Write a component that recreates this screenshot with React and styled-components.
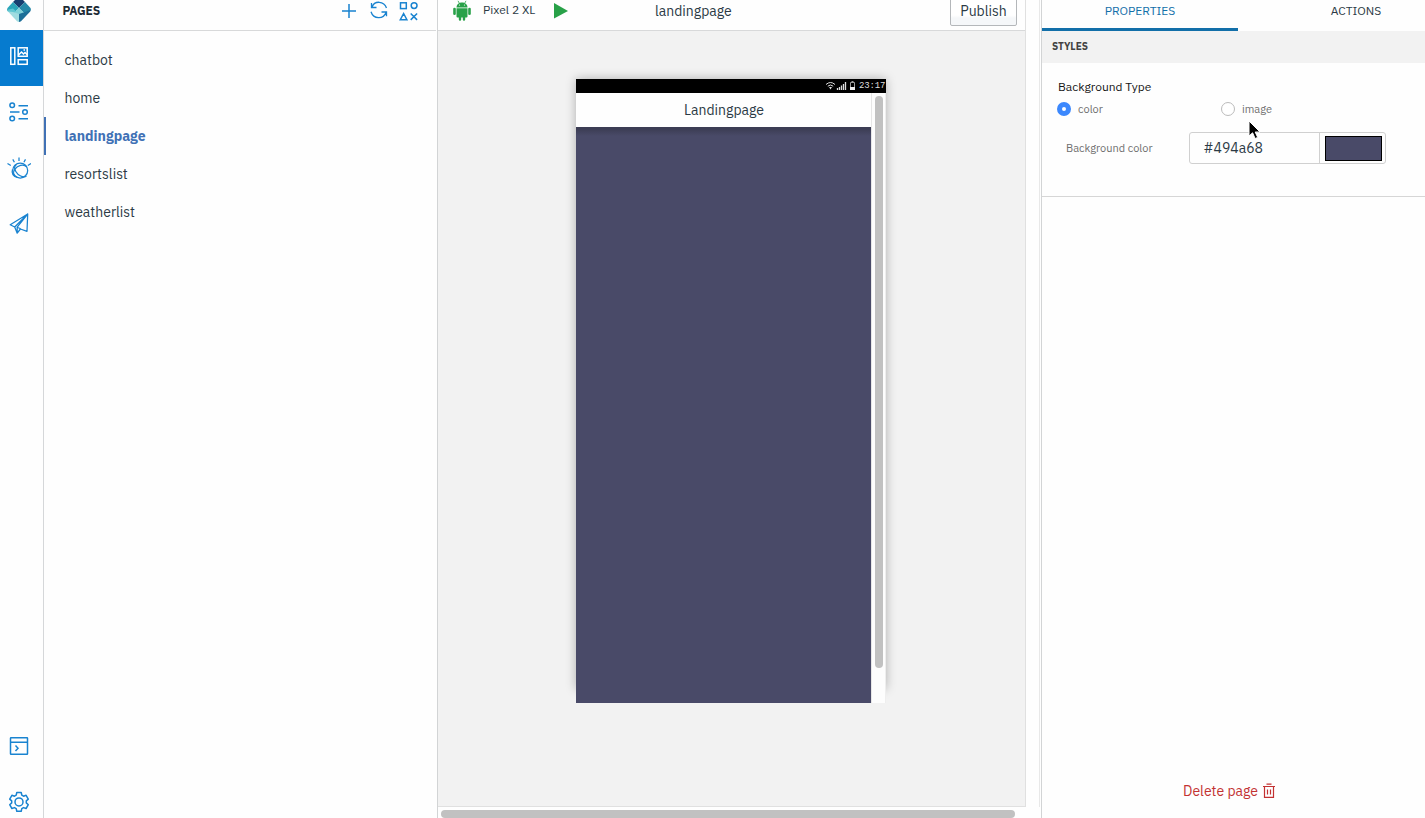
import React from "react";
import styled, { createGlobalStyle } from "styled-components";

const Global = createGlobalStyle`
  * { box-sizing: border-box; }
  body { margin: 0; overflow: hidden; background: #fefefe; font-family: "IBM Plex Sans", Roboto, "Liberation Sans", sans-serif; }
  svg { display: block; flex: none; }
`;

const Shell = styled.div`
  display: flex;
  width: 1425px;
  height: 818px;
  overflow: hidden;
  background: #fefefe;
`;

const Label = styled.span`
  font-size: ${(p) => p.$size || 14}px;
  font-weight: ${(p) => p.$weight || 400};
  letter-spacing: ${(p) => p.$track || 0}px;
  color: ${(p) => p.$color || "#2b3a45"};
  line-height: 20px;
  white-space: nowrap;
`;

const Rail = styled.nav`
  display: flex;
  flex-direction: column;
  width: 44px;
  height: 830px;
  flex: none;
  border-right: 1px solid #d5d7d9;
`;

const Brand = styled.div`
  height: 30px;
  padding-left: 6px;
`;

const RailItem = styled.div`
  display: flex;
  height: 56px;
  padding: 15px 0 0 7px;
  background: ${(p) => (p.$active ? "#067bcf" : "transparent")};
  color: ${(p) => (p.$active ? "#fff" : "#1983d0")};
`;

const RailSpace = styled.div`
  flex: 1;
`;

const PagesPanel = styled.section`
  width: 394px;
  flex: none;
  border-right: 1px solid #d2d4d5;
`;

const PagesHeader = styled.header`
  display: flex;
  height: 31px;
  width: 392px;
  padding: 1px 0 0 18.5px;
  border-bottom: 1px solid #d8d9da;
`;

const Tools = styled.div`
  display: flex;
  gap: 10px;
  margin-left: auto;
  padding: 0 17px 0 0;
  color: #1983d0;
`;

const PageList = styled.div`
  padding-top: 10px;
`;

const PageRow = styled.div`
  display: flex;
  align-items: center;
  height: 38px;
  padding-left: ${(p) => (p.$active ? 18.5 : 20.500)}px;
  border-left: ${(p) => (p.$active ? "2px solid #4071b5" : "0")};
`;

const Center = styled.main`
  width: 602px;
  flex: none;
`;

const CenterTop = styled.div`
  display: flex;
  height: 807px;
  border-right: 1px solid #e8e8e8;
`;

const Workspace = styled.div`
  width: 588px;
  background: #f2f2f2;
  border-right: 1px solid #e0e0e0;
  border-bottom: 1px solid #e0e0e0;
`;

const Toolbar = styled.header`
  display: flex;
  height: 31px;
  padding-left: 15px;
  background: #fefefe;
  border-bottom: 1px solid #d8d9da;
`;

const DeviceName = styled.div`
  display: flex;
  height: 20px;
  width: 53px;
  margin: 0 17px 0 12px;
`;

const Title = styled.div`
  display: flex;
  margin: 1px 0 0 87px;
`;

const Publish = styled.button`
  display: flex;
  align-items: flex-end;
  justify-content: center;
  width: 67px;
  height: 30px;
  margin: -4px 8px 0 auto;
  padding: 0 0 4px;
  border: 1px solid #b4b7ba;
  border-radius: 2px;
  background: linear-gradient(#fff 65%, #f5f7f9 75%);
  font-family: inherit;
`;

const Phone = styled.div`
  width: 310px;
  height: 610px;
  margin: 48px 0 0 138px;
  box-shadow: 0 0 10px rgba(0, 0, 0, 0.28);
`;

const StatusBar = styled.div`
  display: flex;
  align-items: center;
  justify-content: flex-end;
  height: 14px;
  background: #000;
  padding-right: 1px;
`;

const Clock = styled.span`
  width: 26px;
  margin-left: 3px;
  font: 9px/14px "Liberation Mono", monospace;
  letter-spacing: -0.15px;
  color: #ddd;
`;

const PhoneBody = styled.div`
  display: flex;
  height: 610px;
`;

const Screen = styled.div`
  width: 295px;
  background: #494a68;
`;

const ScreenHeader = styled.div`
  display: flex;
  align-items: center;
  justify-content: center;
  height: 34px;
  padding-left: 1px;
  background: #fefefe;
`;

const HeaderShade = styled.div`
  height: 9px;
  background: linear-gradient(#3c3d54 20%, #494a68);
`;

const Track = styled.div`
  width: 15px;
  padding: 3px 2px 0 3px;
  border-left: 1px solid #e6e6e6;
  border-right: 1px solid #eee;
  background: #fdfdfd;
`;

const VThumb = styled.div`
  width: 8px;
  height: 572px;
  border-radius: 4px;
  background: #c1c1c1;
`;

const HThumb = styled.div`
  width: 574px;
  height: 8px;
  margin: 3px 0 0 3px;
  border-radius: 4px;
  background: #c1c1c1;
`;

const Inspector = styled.aside`
  display: flex;
  flex-direction: column;
  width: 385px;
  margin-left: 1px;
  border-left: 1px solid #d2d4d5;
`;

const Tabs = styled.div`
  display: flex;
  height: 31px;
  flex: none;
`;

const Tab = styled.div`
  display: flex;
  justify-content: center;
  flex: none;
  width: ${(p) => (p.$active ? 196 : 236)}px;
  padding-top: 1px;
  border-bottom: ${(p) => (p.$active ? "3px solid #126fa9" : "0")};
`;

const Section = styled.div`
  display: flex;
  align-items: center;
  height: 32px;
  padding-left: 10px;
  background: #f2f2f2;
`;

const Form = styled.div`
  height: 134px;
  padding: 14px 0 0 15px;
  border-bottom: 1px solid #d6d6d6;
`;

const FieldTitle = styled.div`
  height: 20px;
  padding-left: 1px;
  display: flex;
`;

const Options = styled.div`
  display: flex;
  height: 25px;
`;

const Option = styled.div`
  display: flex;
  align-items: center;
  width: 164px;
  height: 24px;
  gap: 7px;
`;

const Radio = styled.span`
  width: 14px;
  height: 14px;
  border-radius: 50%;
  border: ${(p) => (p.$on ? "5px solid #3c88fd" : "1px solid #bbb")};
  background: #fff;
`;

const ColorRow = styled.div`
  display: flex;
  align-items: center;
  height: 32px;
  margin-top: 10px;
  padding-left: 9px;
`;

const ColorName = styled.div`
  display: flex;
  width: 123px;
`;

const ColorField = styled.div`
  display: flex;
  width: 197px;
  height: 32px;
  border: 1px solid #d0d0d0;
  border-radius: 3px;
`;

const HexValue = styled.div`
  display: flex;
  align-items: center;
  width: 130px;
  padding-left: 13.5px;
  border-right: 1px solid #d0d0d0;
`;

const Swatch = styled.div`
  width: 57px;
  height: 25px;
  margin: 3px 0 0 5px;
  border: 1px solid #000;
  background: #494a68;
`;

const DeleteRow = styled.div`
  display: flex;
  align-items: center;
  gap: 4px;
  margin: auto 0 17px 141px;
  color: #c33232;
`;

const Pointer = styled.div`
  position: absolute;
  left: 1247px;
  top: 120px;
`;

const Icon = ({ w = 24, h = 24, box, sw = 1.5, children }) => (
  <svg width={w} height={h} viewBox={box || `0 0 ${w} ${h}`} fill="none" stroke="currentColor" strokeWidth={sw}>
    {children}
  </svg>
);

const Logo = () => (
  <svg width="26" height="23" viewBox="0 0 26 23">
    <path d="M9 0h8l2 2-6 6-6-6z" fill="#173f70" />
    <path d="M7 2l6 6-6 6-5.500-3q-1-1 0-3z" fill="#2aa5b9" />
    <path d="M1.500 9.800L7 8.500l6 5.500-3 1-8-3.500q-1-.8-.5-1.700z" fill="#5fc6d1" />
    <path d="M13 8l6-6 5.500 6q1 1.200 0 2.500L19 14z" fill="#2589a8" />
    <path d="M13 8l6 6-6 5-6-5z" fill="#7fd2d8" />
    <path d="M13 14l6-2 5.500-2q.3 1-.5 1.700L15 21.200q-1 .8-2 .8z" fill="#1d6f98" />
    <path d="M2 11.500l5 .5 6 2v8q-1 0-2-.8z" fill="#a0dce0" />
  </svg>
);

const LayoutIcon = () => (
  <Icon>
    <rect x="3.800" y="2.800" width="4" height="16.500" />
    <rect x="11.200" y="2.800" width="9" height="8.500" />
    <rect x="11.200" y="14.700" width="9" height="4.600" />
    <path d="M11.500 10l3-3 2 2 1.500-1.500 2 2" />
    <path d="M16.500 5h1.500" />
  </Icon>
);

const SlidersIcon = () => (
  <Icon>
    <circle cx="5.200" cy="4.200" r="2.300" />
    <path d="M11.500 4.700H21M3 11h9.500M11.500 17.700H21" />
    <circle cx="18" cy="11" r="2.300" />
    <circle cx="5.200" cy="17.500" r="2.300" />
  </Icon>
);

const WatsonIcon = () => (
  <Icon sw={1.25}>
    <circle cx="13.200" cy="13.500" r="7.500" />
    <path d="M19.500 19.300c-3.500 1.700-8.500-.8-10.700-4.800-1.500-2.800-1.300-5.600.5-6.700" />
    <path d="M19.800 9.800c-3.500-3.500-9.300-1.300-11.900 2.400-2.300 3.300-1.700 7 1.700 7.800M5.500 12.500c-1.300 3.800.8 7.300 5 8" />
    <path d="M12 .5v3.400M5.800 2.400l1.600 2.800M.5 6.500l3.300 2M18.500 2.400l-1.600 2.800M24 6.500l-3.200 2" />
  </Icon>
);

const SendIcon = () => (
  <Icon sw={1.25}>
    <path transform="translate(0 -.8)" d="M20.700 1.800L3.200 12.600l4.500 2.200 2.500 6.200 3.200-4.200 6.600 2.300zM7.700 14.800l13-13-10.500 13.200v6M10.200 15l3.500 1.600" strokeLinejoin="round" />
  </Icon>
);

const TerminalIcon = () => (
  <Icon>
    <rect x="3.500" y="4.800" width="17" height="16.500" rx=".5" />
    <path d="M3.500 9.200h17M8.500 12.500l2.500 2.700-2.500 2.700" />
  </Icon>
);

const GearIcon = () => (
  <Icon>
    <path d="M9.800 3.500h4.400l.6 2.700 1.700 1 2.600-.9 2.200 3.800-2 1.800v2l2 1.800-2.200 3.800-2.600-.9-1.700 1-.6 2.700H9.800l-.6-2.700-1.700-1-2.600.9-2.200-3.800 2-1.800v-2l-2-1.800 2.200-3.800 2.600.9 1.700-1z" strokeLinejoin="round" />
    <circle cx="12" cy="12.900" r="4" />
  </Icon>
);

const PlusIcon = () => (
  <Icon w={20} h={20}>
    <path d="M10 3v14M3 10h14" />
  </Icon>
);

const SyncIcon = () => (
  <Icon w={20} h={20} sw={1.300}>
    <path d="M2.500 2V6.500h5M3 6.200C5.300-.5 15-.5 17.500 7M17.500 15.300V11h-5M17 11.500C14.500 18.500 4.500 18.500 2 10.700" />
  </Icon>
);

const ShapesIcon = () => (
  <Icon w={20} h={20} sw={1.500}>
    <rect x="1.500" y="1.800" width="5.800" height="5.800" />
    <circle cx="15.100" cy="4.600" r="2.900" />
    <path d="M4.600 12.500l3.300 6.200H1.300zM11.700 12.500l6.400 6.400M18.100 12.500l-6.400 6.400" />
  </Icon>
);

const AndroidIcon = () => (
  <svg width="18" height="22" viewBox="0 0 18 22" fill="#28a148">
    <path d="M3.500 7.500C3.500.7 14.500.7 14.500 7.500z" />
    <path d="M5 .8l1.500 2.800M13 .8l-1.500 2.800" stroke="#28a148" strokeWidth=".8" />
    <path d="M3.500 8.300h11V16.500q0 1-1 1h-1.300v2a1.200 1.200 0 0 1-2.400 0v-2H8.200v2a1.200 1.200 0 0 1-2.400 0v-2H4.500q-1 0-1-1z" />
    <rect x=".2" y="7.700" width="2.600" height="7.300" rx="1.300" />
    <rect x="15.200" y="7.700" width="2.600" height="7.300" rx="1.300" />
    <circle cx="6.500" cy="5" r=".6" fill="#fff" />
    <circle cx="11.500" cy="5" r=".6" fill="#fff" />
  </svg>
);

const StatusIcons = () => (
  <svg width="31" height="14" viewBox="0 0 31 14" fill="none" stroke="#ddd">
    <path d="M1 5.500q4.500-4 9 0M2.800 7.200q2.700-2.400 5.400 0" strokeWidth="1" />
    <path d="M4 8l1.500 2.500L7 8z" fill="#ddd" stroke="none" />
    <path d="M12.500 9v2M14.500 8v3M16.500 6.500V11M18.500 5v6M20.500 3v8" strokeWidth="1.300" />
    <path d="M25.500 3.500h4v7h-4zM26.500 2.500h2" stroke="#999" />
    <path d="M25 8h5v3h-5z" fill="#eee" stroke="none" />
  </svg>
);

const TrashIcon = () => (
  <Icon w={14} h={16} sw={1.200}>
    <path d="M1 3.500h12M4.500 1.200h5M2.500 3.500v10.900h9V3.500M5.500 6.500v5M8.500 6.500v5" />
  </Icon>
);

const pages = [
  { name: "chatbot" },
  { name: "home" },
  { name: "landingpage", active: true },
  { name: "resortslist" },
  { name: "weatherlist" },
];

export default function App() {
  return (
    <Shell>
      <Global />
      <Rail>
        <Brand><Logo /></Brand>
        <RailItem $active><LayoutIcon /></RailItem>
        <RailItem><SlidersIcon /></RailItem>
        <RailItem><WatsonIcon /></RailItem>
        <RailItem><SendIcon /></RailItem>
        <RailSpace />
        <RailItem><TerminalIcon /></RailItem>
        <RailItem><GearIcon /></RailItem>
      </Rail>
      <PagesPanel>
        <PagesHeader>
          <Label $size={12} $weight={700} $track={-0.15} $color="#1d2b35">PAGES</Label>
          <Tools><PlusIcon /><SyncIcon /><ShapesIcon /></Tools>
        </PagesHeader>
        <PageList>
          {pages.map((p) => (
            <PageRow key={p.name} $active={p.active}>
              <Label $weight={p.active ? 700 : 400} $color={p.active ? "#4071b5" : undefined}>{p.name}</Label>
            </PageRow>
          ))}
        </PageList>
      </PagesPanel>
      <Center>
        <CenterTop>
          <Workspace>
            <Toolbar>
              <AndroidIcon />
              <DeviceName><Label $size={12}>Pixel 2 XL</Label></DeviceName>
              <svg width="15" height="20" viewBox="0 0 15 20"><path d="M1 3l14 8-14 7.500z" fill="#28a148" /></svg>
              <Title><Label>landingpage</Label></Title>
              <Publish><Label>Publish</Label></Publish>
            </Toolbar>
            <Phone>
              <StatusBar><StatusIcons /><Clock>23:17</Clock></StatusBar>
              <PhoneBody>
                <Screen>
                  <ScreenHeader><Label>Landingpage</Label></ScreenHeader>
                  <HeaderShade />
                </Screen>
                <Track><VThumb /></Track>
              </PhoneBody>
            </Phone>
          </Workspace>
        </CenterTop>
        <HThumb />
      </Center>
      <Inspector>
        <Tabs>
          <Tab $active><Label $size={12} $color="#126fa9">PROPERTIES</Label></Tab>
          <Tab><Label $size={12}>ACTIONS</Label></Tab>
        </Tabs>
        <Section><Label $size={10} $weight={700} $color="#424242">STYLES</Label></Section>
        <Form>
          <FieldTitle><Label $size={12} $color="#161616">Background Type</Label></FieldTitle>
          <Options>
            <Option><Radio $on /><Label $size={11} $color="#6f6f6f">color</Label></Option>
            <Option><Radio /><Label $size={11} $color="#6f6f6f">image</Label></Option>
          </Options>
          <ColorRow>
            <ColorName><Label $size={11} $color="#6f6f6f">Background color</Label></ColorName>
            <ColorField>
              <HexValue><Label>#494a68</Label></HexValue>
              <Swatch />
            </ColorField>
          </ColorRow>
        </Form>
        <DeleteRow><Label $color="#c33232">Delete page</Label><TrashIcon /></DeleteRow>
      </Inspector>
      <Pointer>
        <svg width="14" height="21" viewBox="0 0 14 21"><path d="M2 1v15l3.600-3.200 2.500 5.700 2.600-1.100L8.200 12H13z" fill="#000" stroke="#fff" strokeWidth="1" /></svg>
      </Pointer>
    </Shell>
  );
}
